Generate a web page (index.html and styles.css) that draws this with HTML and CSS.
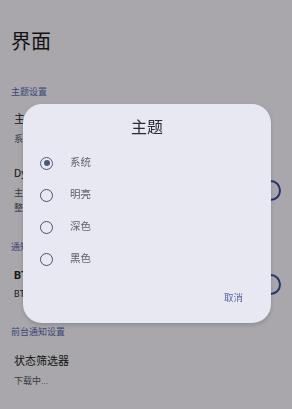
FILE: index.html
```html
<!DOCTYPE html>
<html lang="zh">
<head>
<meta charset="utf-8">
<link rel="stylesheet" href="styles.css">
</head>
<body>
<main class="page">
  <h1 class="page-title">界面</h1>

  <div class="section-label s1">主题设置</div>
  <div class="item i1">
    <div class="item-text">
      <div class="item-title">主题</div>
      <div class="item-sub">系统</div>
    </div>
  </div>
  <div class="item i2">
    <div class="item-text">
      <div class="item-title">Dynamic Color</div>
      <div class="item-sub">主题颜色基于您的壁纸生成并应用于</div>
      <div class="item-sub">整个应用界面</div>
    </div>
    <div class="switch"></div>
  </div>

  <div class="section-label s2">通知设置</div>
  <div class="item i3">
    <div class="item-text">
      <div class="item-title bold">BT 通知</div>
      <div class="item-sub dark">BT 下载完成时通知</div>
    </div>
    <div class="switch"></div>
  </div>

  <div class="section-label s3">前台通知设置</div>
  <div class="item i4">
    <div class="item-text">
      <div class="item-title">状态筛选器</div>
      <div class="item-sub">下载中...</div>
    </div>
  </div>
</main>

<div class="scrim"></div>

<div class="dialog">
  <div class="dialog-title">主题</div>
  <div class="options">
    <div class="option"><span class="radio checked"></span><span class="option-label">系统</span></div>
    <div class="option"><span class="radio"></span><span class="option-label">明亮</span></div>
    <div class="option"><span class="radio"></span><span class="option-label">深色</span></div>
    <div class="option"><span class="radio"></span><span class="option-label">黑色</span></div>
  </div>
  <div class="actions"><span class="btn">取消</span></div>
</div>
</body>
</html>
```

FILE: styles.css
```css
* { box-sizing: border-box; }
html, body { margin: 0; padding: 0; }
body {
  width: 292px;
  height: 409px;
  overflow: hidden;
  background: #f9f7fe;
  font-family: "Roboto", "Noto Sans CJK SC", sans-serif;
  color: #1b1b21;
}
.page {
  padding: 30px 11px 0 11px;
}
.page-title {
  margin: 0;
  font-size: 20px;
  line-height: 24px;
  font-weight: 400;
  color: #1d1d22;
}
.section-label {
  font-size: 9px;
  line-height: 12px;
  color: #5866ad;
}
.s1 { margin-top: 32px; }
.s2 { margin-top: 25.5px; }
.s3 { margin-top: 24.5px; }
.item {
  display: flex;
  align-items: center;
  padding-left: 3px;
}
.i1 { padding-top: 14px; }
.i2 { padding-top: 19.5px; }
.i3 { padding-top: 15px; }
.i4 { padding-top: 16px; }
.item-text { flex: 1; }
.item-title {
  font-size: 11px;
  line-height: 16px;
  color: #1b1b21;
}
.item-title.bold { font-weight: 700; }
.item-sub {
  font-size: 9px;
  line-height: 15px;
  color: #55565f;
  margin-top: 3.5px;
}
.item-sub + .item-sub { margin-top: 0; }
.item-sub.dark { color: #2a2a30; margin-top: 2.5px; }
.switch {
  width: 38px;
  height: 21px;
  border: 2px solid #3a4c9e;
  border-radius: 11px;
  background: #f9f7fe;
  flex: none;
}

.scrim {
  position: fixed;
  inset: 0;
  background: rgba(0, 0, 0, 0.32);
}

.dialog {
  position: fixed;
  left: 23px;
  top: 104px;
  width: 248px;
  height: 219px;
  background: #e8e8f3;
  border-radius: 19px;
  box-shadow: 0 2px 5px rgba(0, 0, 0, 0.18);
  padding: 14px 0 0 0;
  display: flex;
  flex-direction: column;
}
.dialog-title {
  text-align: center;
  font-size: 16px;
  line-height: 20px;
  color: #2a2a30;
}
.options {
  margin-top: 9px;
  display: flex;
  flex-direction: column;
}
.option {
  height: 32px;
  display: flex;
  align-items: center;
  padding-left: 17px;
}
.radio {
  width: 13px;
  height: 13px;
  border: 1.6px solid #4e5060;
  border-radius: 50%;
  display: flex;
  align-items: center;
  justify-content: center;
  flex: none;
}
.radio.checked { border-color: #4f5876; }
.radio.checked::after {
  content: "";
  width: 6px;
  height: 6px;
  border-radius: 50%;
  background: #4f5876;
}
.option-label {
  margin-left: 17px;
  font-size: 10.5px;
  line-height: 14px;
  color: #606169;
}
.actions {
  margin-top: 13px;
  display: flex;
  justify-content: flex-end;
  padding-right: 28px;
}
.btn {
  font-size: 9.5px;
  line-height: 20px;
  color: #5a66a6;
}
```
